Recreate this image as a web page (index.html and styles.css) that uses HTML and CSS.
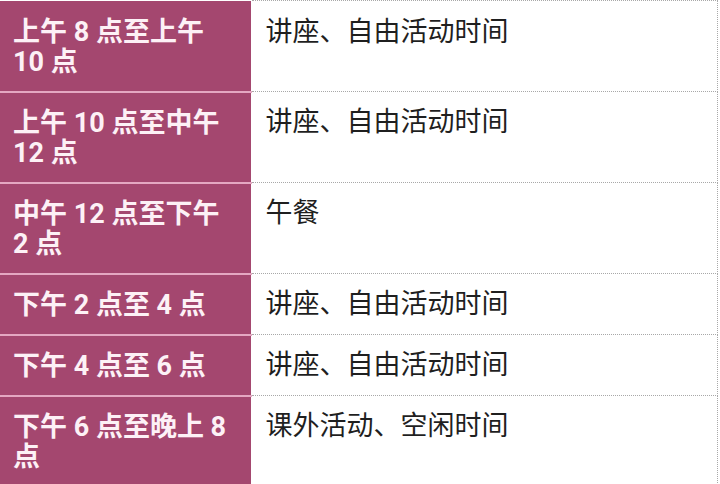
FILE: index.html
```html
<!DOCTYPE html>
<html lang="zh-CN">
<head>
<meta charset="utf-8">
<link rel="stylesheet" href="styles.css">
</head>
<body>
<table class="schedule">
  <tbody>
    <tr class="first"><th class="time">上午 8 点至上午 10 点</th><td class="act">讲座、自由活动时间</td></tr>
    <tr><th class="time">上午 10 点至中午 12 点</th><td class="act">讲座、自由活动时间</td></tr>
    <tr><th class="time">中午 12 点至下午 2 点</th><td class="act">午餐</td></tr>
    <tr><th class="time">下午 2 点至 4 点</th><td class="act">讲座、自由活动时间</td></tr>
    <tr><th class="time">下午 4 点至 6 点</th><td class="act">讲座、自由活动时间</td></tr>
    <tr><th class="time">下午 6 点至晚上 8 点</th><td class="act">课外活动、空闲时间</td></tr>
  </tbody>
</table>
</body>
</html>
```
FILE: styles.css
```css
html, body {
  margin: 0;
  padding: 0;
  background: #ffffff;
}
body {
  font-family: "Roboto", "Noto Sans CJK SC", sans-serif;
  overflow: hidden;
}
.schedule {
  border-collapse: collapse;
  width: 718px;
  table-layout: fixed;
  font-size: 27px;
  line-height: 30px;
}
.time {
  width: 251px;
  box-sizing: border-box;
  background: #a4476f;
  color: #fdf1f6;
  font-weight: 700;
  text-align: left;
  vertical-align: top;
  padding: 15px 16px 14px 13px;
  border-bottom: 2px solid #e4a8c2;
  border-top: 0;
}
.act {
  color: #1f1f1f;
  font-weight: 400;
  vertical-align: top;
  padding: 15px 13px 14px 14px;
  border-top: 1px dotted #a8a8a8;
  border-bottom: 1px dotted #a8a8a8;
  border-right: 1px dotted #a8a8a8;
  border-left: 1px solid #ffffff;
}
.first .time,
.first .act {
  padding-top: 16px;
}
```
